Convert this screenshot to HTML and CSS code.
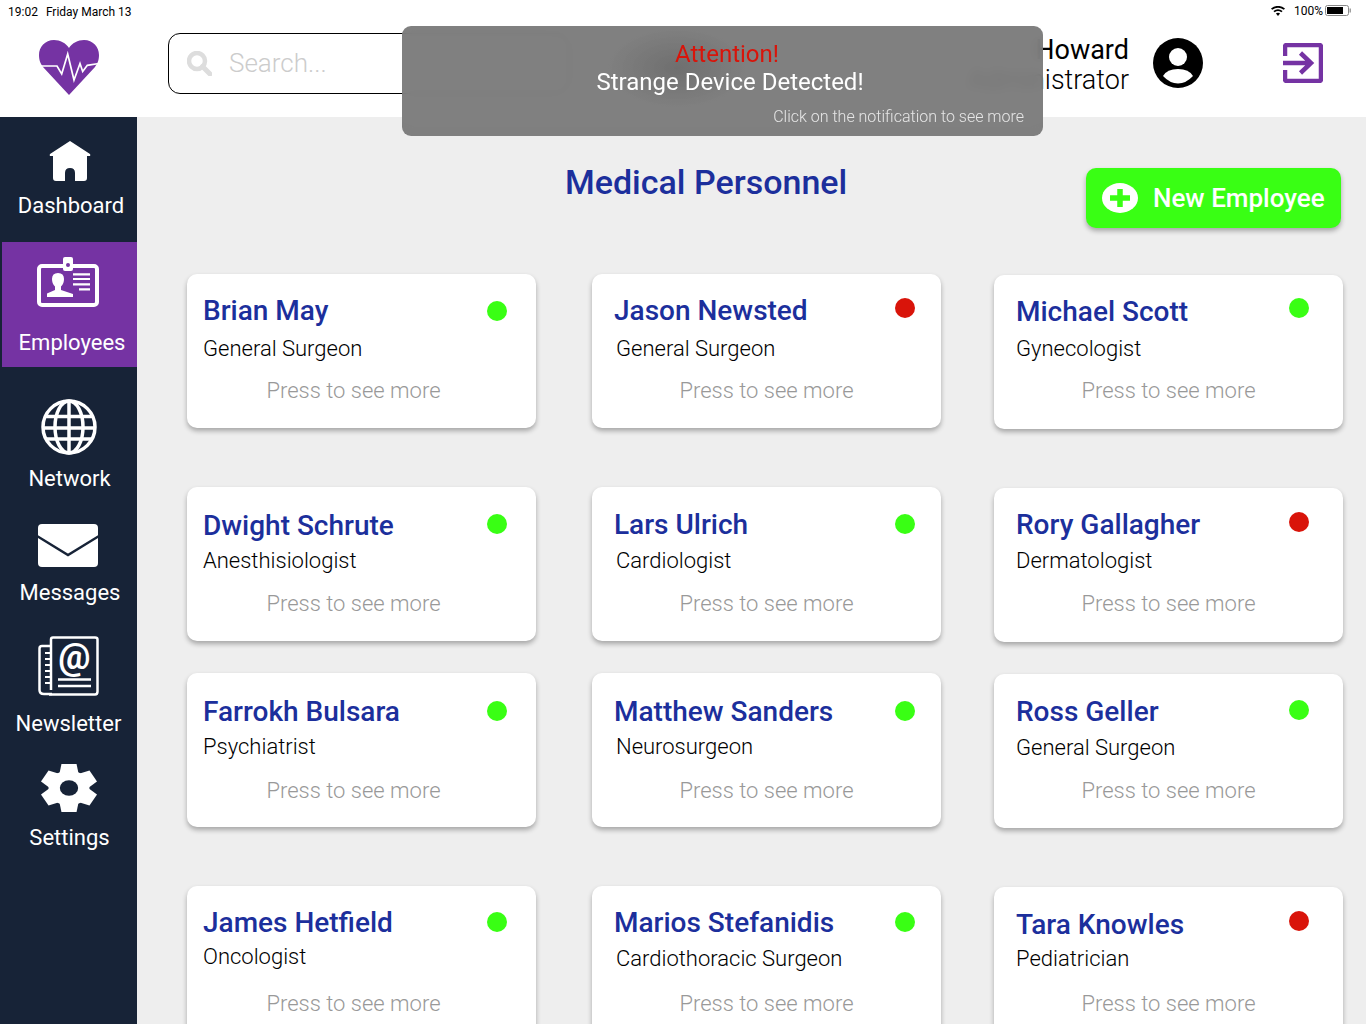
FILE: index.html
```html
<!DOCTYPE html>
<html lang="en">
<head>
<meta charset="UTF-8">
<title>Medical Personnel</title>
<link rel="stylesheet" href="styles.css">
</head>
<body>

<header class="topbar">
  <div class="status">
    <span class="status-time">19:02</span>
    <span class="status-date">Friday March 13</span>
    <svg class="wifi" viewBox="0 0 14 10"><path d="M7 10 4.900 7.600Q7 6 9.100 7.600ZM3.600 6.300 2.400 5Q7 1.400 11.600 5L10.400 6.300Q7 3.700 3.600 6.300ZM1.200 3.700 0 2.400Q7-2.600 14 2.400L12.800 3.700Q7-.4 1.200 3.700Z" fill="#000"/></svg>
    <span class="status-pct">100%</span>
    <svg class="battery" viewBox="0 0 26 11"><rect x=".5" y=".5" width="23" height="10" rx="2" fill="none" stroke="#888"/><rect x="2" y="2" width="16" height="7" fill="#000"/><rect x="24.600" y="3.500" width="1.200" height="4" fill="#888"/></svg>
  </div>
  <div class="topbar-row">
    <svg class="logo" viewBox="0 0 60 55">
      <path d="M30 8C27 3 21 0 15 0 6 0 0 7 0 15 0 21 2 24 4 27L30 55 56 27C58 24 60 21 60 15 60 7 54 0 45 0 39 0 33 3 30 8Z" fill="#7533a3"/>
      <path d="M1 26H18L22.700 34 28.700 14 35 40 41 23.500 43.700 31.500 48.300 25.300 60 23.500" fill="none" stroke="#fff" stroke-width="1.700"/>
    </svg>
    <div class="search">
      <svg class="search-icon" viewBox="0 0 25 25"><circle cx="10" cy="10" r="8" fill="none" stroke="#ddd" stroke-width="4.500"/><path d="M15.500 15.500 23 23" stroke="#ddd" stroke-width="5" stroke-linecap="round"/></svg>
      <span class="search-text">Search...</span>
    </div>
    <div class="user">
      <div class="user-name">Howard</div>
      <div class="user-role">Administrator</div>
    </div>
    <svg class="avatar" viewBox="0 0 50 50">
      <circle cx="25" cy="25" r="25" fill="#000"/>
      <circle cx="25" cy="19" r="9" fill="#fff"/>
      <path d="M10 38Q14 31 25 31 36 31 40 38 33 45.500 25 45.500 17 45.500 10 38Z" fill="#fff"/>
    </svg>
    <svg class="exit" viewBox="0 0 40 40">
      <path d="M2 13V4Q2 2 4 2H36Q38 2 38 4V36Q38 38 36 38H4Q2 38 2 36V27" fill="none" stroke="#7533a3" stroke-width="4.500"/>
      <path d="M0 20H27M17.500 10 28 20 17.500 30" fill="none" stroke="#7533a3" stroke-width="4.500"/>
    </svg>
  </div>
</header>

<div class="notification">
  <div class="notification-title">Attention!</div>
  <div class="notification-text">Strange Device Detected!</div>
  <div class="notification-hint">Click on the notification to see more</div>
</div>

<div class="layout">
  <nav class="sidebar">
    <a class="nav-item nav-dashboard">
      <svg width="42" height="40" viewBox="0 0 42 40"><path d="M21 0 41 13Q42 15 40 15H38V37Q38 40 35 40H26V32Q26 27 21 27 16 27 16 32V40H7Q4 40 4 37V15H2Q0 15 1 13Z" fill="#fff"/></svg>
      <span>Dashboard</span>
    </a>
    <a class="nav-item nav-employees">
      <svg width="62" height="50" viewBox="0 0 62 50">
        <rect x="2" y="9" width="58" height="39" rx="3" fill="none" stroke="#fff" stroke-width="4"/>
        <rect x="26" y="0" width="10" height="14" rx="2" fill="#fff"/>
        <circle cx="31" cy="8" r="2" fill="#7533a3"/>
        <path d="M10 40V36.500L18 33V29.500Q15 27 15 22 15 16 21 16 27 16 27 22 27 27 24 29.500V33L36 37V40Z" fill="#fff"/>
        <path d="M36 17.300H53M36 22H53M36 27.300H53M42 32.300H53" stroke="#fff" stroke-width="2.200"/>
      </svg>
      <span>Employees</span>
    </a>
    <a class="nav-item nav-network">
      <svg width="56" height="56" viewBox="0 0 56 56" fill="none" stroke="#fff" stroke-width="3.500">
        <circle cx="28" cy="28" r="26"/>
        <ellipse cx="28" cy="28" rx="14" ry="26"/>
        <path d="M28 2V54M5 17.500H51M2 29H54M5 40H51"/>
      </svg>
      <span>Network</span>
    </a>
    <a class="nav-item nav-messages">
      <svg width="60" height="43" viewBox="0 0 60 43">
        <rect width="60" height="43" rx="4" fill="#fff"/>
        <path d="M-1 12 30 31 61 12" fill="none" stroke="#172337" stroke-width="2.500"/>
      </svg>
      <span>Messages</span>
    </a>
    <a class="nav-item nav-newsletter">
      <svg width="61" height="60" viewBox="0 0 61 60">
        <path d="M13 10H4Q1.500 10 1.500 12.500V54Q1.500 58 6 58H14" fill="none" stroke="#fff" stroke-width="2.500"/>
        <path d="M13 54V3.500Q13 1.500 15 1.500H57Q59.500 1.500 59.500 3.500V55.500Q59.500 58.500 57 58.500H11" fill="none" stroke="#fff" stroke-width="2.500"/>
        <path d="M7 17H13M7 23H13M7 29H13M7 35H13M7 41H13M7 47H13" stroke="#fff" stroke-width="2"/>
        <text class="at-sign" x="36.500" y="33">@</text>
        <path d="M20 43.500H53M20 50H53" stroke="#fff" stroke-width="2.500"/>
      </svg>
      <span>Newsletter</span>
    </a>
    <a class="nav-item nav-settings">
      <svg width="56" height="48" viewBox="-26 -26 52 52" preserveAspectRatio="none">
        <circle r="19" fill="#fff"/>
        <g fill="#fff">
          <path d="M-7-26H7L9-15H-9Z"/>
          <path d="M-7-26H7L9-15H-9Z" transform="rotate(60)"/>
          <path d="M-7-26H7L9-15H-9Z" transform="rotate(120)"/>
          <path d="M-7-26H7L9-15H-9Z" transform="rotate(180)"/>
          <path d="M-7-26H7L9-15H-9Z" transform="rotate(240)"/>
          <path d="M-7-26H7L9-15H-9Z" transform="rotate(300)"/>
        </g>
        <circle r="8.500" fill="#172337"/>
      </svg>
      <span>Settings</span>
    </a>
  </nav>

  <main class="content">
    <div class="title-row">
      <h1 class="page-title">Medical Personnel</h1>
      <button class="new-btn">
        <svg class="new-btn-icon" viewBox="0 0 36 30">
          <ellipse cx="18" cy="15" rx="18" ry="15" fill="#fff"/>
          <path d="M18 6V24M8 15H28" stroke="#39ff14" stroke-width="5.500"/>
        </svg>
        New Employee
      </button>
    </div>

    <div class="columns">
      <div class="column column-a">
        <div class="card"><div class="card-head"><span class="card-name">Brian May</span><i class="dot dot-on"></i></div><div class="card-role role-d1">General Surgeon</div><div class="card-more">Press to see more</div></div>
        <div class="card"><div class="card-head"><span class="card-name name-d2">Dwight Schrute</span><i class="dot dot-on"></i></div><div class="card-role">Anesthisiologist</div><div class="card-more">Press to see more</div></div>
        <div class="card"><div class="card-head"><span class="card-name name-d2">Farrokh Bulsara</span><i class="dot dot-on dot-d1"></i></div><div class="card-role">Psychiatrist</div><div class="card-more more-d1">Press to see more</div></div>
        <div class="card"><div class="card-head"><span class="card-name">James Hetfield</span><i class="dot dot-on dot-u1"></i></div><div class="card-role role-u3">Oncologist</div><div class="card-more more-d1">Press to see more</div></div>
      </div>
      <div class="column column-b">
        <div class="card"><div class="card-head"><span class="card-name">Jason Newsted</span><i class="dot dot-off dot-u3"></i></div><div class="card-role role-d1">General Surgeon</div><div class="card-more">Press to see more</div></div>
        <div class="card"><div class="card-head"><span class="card-name name-d1">Lars Ulrich</span><i class="dot dot-on"></i></div><div class="card-role">Cardiologist</div><div class="card-more">Press to see more</div></div>
        <div class="card"><div class="card-head"><span class="card-name name-d2">Matthew Sanders</span><i class="dot dot-on dot-d1"></i></div><div class="card-role">Neurosurgeon</div><div class="card-more more-d1">Press to see more</div></div>
        <div class="card"><div class="card-head"><span class="card-name">Marios Stefanidis</span><i class="dot dot-on dot-u1"></i></div><div class="card-role role-u1">Cardiothoracic Surgeon</div><div class="card-more more-d1">Press to see more</div></div>
      </div>
      <div class="column column-c">
        <div class="card"><div class="card-head"><span class="card-name">Michael Scott</span><i class="dot dot-on dot-u4"></i></div><div class="card-role">Gynecologist</div><div class="card-more more-u1">Press to see more</div></div>
        <div class="card"><div class="card-head"><span class="card-name">Rory Gallagher</span><i class="dot dot-off dot-u3"></i></div><div class="card-role role-u1">Dermatologist</div><div class="card-more more-u1">Press to see more</div></div>
        <div class="card"><div class="card-head"><span class="card-name name-d1">Ross Geller</span><i class="dot dot-on dot-u1"></i></div><div class="card-role">General Surgeon</div><div class="card-more">Press to see more</div></div>
        <div class="card"><div class="card-head"><span class="card-name name-d1">Tara Knowles</span><i class="dot dot-off dot-u3"></i></div><div class="card-role role-u2">Pediatrician</div><div class="card-more">Press to see more</div></div>
      </div>
    </div>
  </main>
</div>

</body>
</html>
```

FILE: styles.css
```css
html, body {
  margin: 0;
  height: 1024px;
  overflow: hidden;
}
body {
  font-family: 'Roboto', 'Liberation Sans', sans-serif;
  background-color: #eeeeee;
  color: #000;
  position: relative;
}

/* top bar */
.topbar {
  height: 117px;
  background-color: #fff;
}
.status {
  height: 24px;
  display: flex;
  align-items: center;
  font-size: 12px;
  padding-left: 8px;
}
.status-date {
  margin-left: 8px;
}
.wifi {
  width: 14px;
  height: 10px;
  margin-left: auto;
  margin-top: -3px;
}
.status-pct {
  margin-left: 9px;
  margin-top: -3px;
}
.battery {
  width: 26px;
  height: 11px;
  margin: -3px 15px 0 2px;
}
.topbar-row {
  display: flex;
  align-items: flex-start;
  height: 93px;
}
.logo {
  width: 60px;
  height: 55px;
  margin: 16px 0 0 39px;
}
.search {
  width: 400px;
  height: 59px;
  margin: 9px 0 0 69px;
  border: 1px solid #000;
  border-radius: 12px;
  display: flex;
  align-items: center;
}
.search-icon {
  width: 25px;
  height: 25px;
  margin-left: 18px;
}
.search-text {
  margin: 0 0 2px 17px;
  font-size: 26px;
  font-weight: 300;
  color: #ccc;
}
.user {
  width: 300px;
  margin: 11px 0 0 259px;
  text-align: right;
  font-size: 27px;
  line-height: 30px;
}
.user-role {
  font-weight: 300;
}
.avatar {
  width: 50px;
  height: 50px;
  margin: 14px 0 0 24px;
}
.exit {
  width: 40px;
  height: 40px;
  margin: 19px 0 0 80px;
}

/* notification */
.notification {
  position: absolute;
  left: 402px;
  top: 26px;
  width: 641px;
  height: 110px;
  box-sizing: border-box;
  padding-top: 14px;
  border-radius: 9px;
  background-color: rgba(120, 120, 120, 0.94);
  background-image: radial-gradient(ellipse 70px 40px at 275px 42px, rgba(90, 90, 90, 0.45), transparent);
  backdrop-filter: blur(6px);
  text-align: center;
  color: #fff;
}
.notification-title {
  margin-left: 9px;
  font-size: 24px;
  line-height: 28px;
  color: #d9140a;
}
.notification-text {
  margin-left: 15px;
  font-size: 24px;
  line-height: 28px;
}
.notification-hint {
  padding-right: 19px;
  margin-top: 11px;
  text-align: right;
  font-size: 16px;
  line-height: 20px;
  font-weight: 300;
  color: #e6e6e6;
}

/* sidebar */
.layout {
  display: flex;
}
.sidebar {
  width: 137px;
  height: 907px;
  flex-shrink: 0;
  background-color: #172337;
}
.nav-item {
  display: flex;
  flex-direction: column;
  align-items: center;
  color: #fff;
  font-size: 22px;
  line-height: 30px;
}
.nav-dashboard { height: 101px; padding-top: 24px; gap: 10px; padding-left: 3px; }
.nav-dashboard span { margin-left: 2px; }
.nav-employees { height: 110px; padding-top: 15px; gap: 21px; margin-left: 2px; background-color: #7533a3; }
.nav-employees svg { margin-right: 4px; }
.nav-employees span { margin-left: 5px; }
.nav-network { height: 106px; padding-top: 32px; gap: 9px; }
.nav-network span { margin-left: 2px; }
.nav-messages { height: 101px; padding-top: 19px; gap: 11px; }
.nav-messages svg { margin-right: 2px; }
.nav-messages span { margin-left: 3px; }
.nav-newsletter { height: 114px; padding-top: 11px; gap: 13px; }
.nav-settings { height: 100px; padding-top: 14px; gap: 11px; }
.nav-settings span { margin-left: 2px; }
.at-sign {
  font-size: 36px;
  font-weight: 700;
  fill: #fff;
  text-anchor: middle;
}

/* main */
.content {
  flex: 1;
}
.title-row {
  display: flex;
  align-items: flex-start;
  height: 60px;
  padding: 51px 25px 0 0;
}
.page-title {
  margin: -7px 0 0 428px;
  font-size: 34px;
  line-height: 42px;
  font-weight: 500;
  color: #1c2f9c;
}
.new-btn {
  display: flex;
  align-items: center;
  width: 255px;
  height: 60px;
  margin-left: auto;
  padding: 0 0 0 16px;
  border: none;
  border-radius: 10px;
  background-color: #39ff14;
  box-shadow: 0 3px 5px rgba(0, 0, 0, 0.3);
  color: #fff;
  font-family: inherit;
  font-size: 26px;
  font-weight: 500;
}
.new-btn-icon {
  width: 36px;
  height: 30px;
  margin-right: 15px;
}
.columns {
  display: flex;
  align-items: flex-start;
  margin-top: 46px;
  padding-left: 50px;
}
.column {
  width: 349px;
  flex-shrink: 0;
}
.column-b { margin-left: 56px; }
.column-c { margin-left: 53px; padding-top: 1px; }
.column .card:nth-child(2) { margin-top: 59px; }
.column .card:nth-child(3) { margin-top: 32px; }
.column .card:nth-child(4) { margin-top: 59px; }

/* cards */
.card {
  height: 154px;
  box-sizing: border-box;
  padding-top: 20px;
  background-color: #fff;
  border-radius: 10px;
  box-shadow: 0 3px 5px rgba(0, 0, 0, 0.3);
}
.card-head {
  display: flex;
  justify-content: space-between;
  align-items: flex-start;
  height: 34px;
  padding: 0 29px 0 16px;
}
.card-name {
  font-size: 28px;
  line-height: 34px;
  font-weight: 500;
  color: #1c2f9c;
}
.name-d1 { margin-top: 1px; }
.name-d2 { margin-top: 2px; }
.dot {
  width: 20px;
  height: 20px;
  margin-top: 7px;
  border-radius: 50%;
}
.dot-on { background-color: #39ff14; }
.dot-off { background-color: #d9140a; }
.dot-d1 { margin-top: 8px; }
.dot-u1 { margin-top: 6px; }
.dot-u3 { margin-top: 4px; }
.dot-u4 { margin-top: 3px; }
.card-role {
  margin: 5px 0 13px;
  padding-left: 16px;
  font-size: 22px;
  line-height: 30px;
  font-weight: 300;
}
.role-d1 { margin: 6px 0 12px; }
.role-u1 { margin: 4px 0 14px; }
.role-u2 { margin: 3px 0 15px; }
.role-u3 { margin: 2px 0 16px; }
.card-more {
  padding-right: 16px;
  text-align: center;
  font-size: 22px;
  line-height: 30px;
  font-weight: 300;
  color: #999;
}
.more-u1 { margin-top: -1px; }
.more-d1 { padding-top: 1px; }
.column-b .card-head { padding: 0 26px 0 22px; }
.column-b .card-role { padding-left: 24px; }
.column-b .card-more { padding-right: 0; }
.column-c .card-head { padding: 0 34px 0 22px; }
.column-c .card-role { padding-left: 22px; }
.column-c .card-more { padding-right: 0; }
```
